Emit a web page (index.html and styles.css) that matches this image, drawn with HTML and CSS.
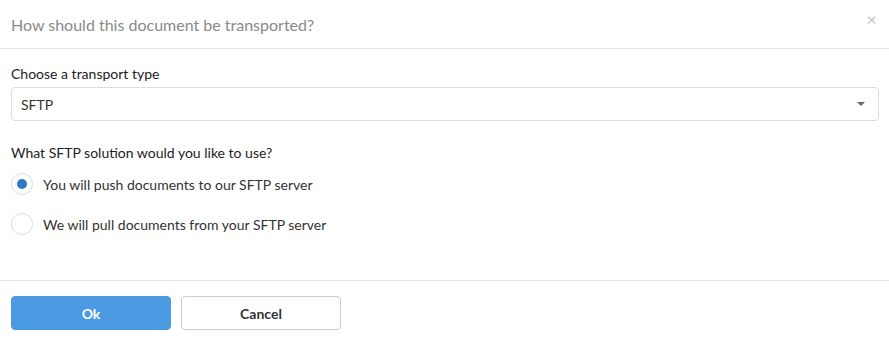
FILE: index.html
```html
<!DOCTYPE html>
<html>
<head>
    <title>Transport</title>
    <link rel="stylesheet" href="styles.css">
</head>
<body>
    <div class="modal">
        <div class="modal-header">
            <h2>How should this document be transported?</h2>
            <span class="close">&times;</span>
        </div>
        <div class="modal-body">
            <label class="field-label">Choose a transport type</label>
            <div class="select">
                <span>SFTP</span>
                <span class="caret"></span>
            </div>
            <div class="field-label question">What SFTP solution would you like to use?</div>
            <div class="radio-row">
                <span class="radio checked"></span>
                <span>You will push documents to our SFTP server</span>
            </div>
            <div class="radio-row">
                <span class="radio"></span>
                <span>We will pull documents from your SFTP server</span>
            </div>
        </div>
        <div class="modal-footer">
            <button class="btn btn-primary">Ok</button>
            <button class="btn btn-default">Cancel</button>
        </div>
    </div>
</body>
</html>
```

FILE: styles.css
```css
body {
    margin: 0;
    background: #fff;
    font-family: "Lato", "Liberation Sans", sans-serif;
    color: #333;
}
.modal {
    width: 889px;
    height: 341px;
}
.modal-header {
    height: 48px;
    padding: 0 11px;
    display: flex;
    align-items: center;
    justify-content: space-between;
    border-bottom: 1px solid #e5e5e5;
}
.modal-header h2 {
    margin: 0;
    font-size: 16px;
    font-weight: normal;
    color: #8a8a8a;
}
.close {
    color: #c4c4c4;
    font-size: 18px;
    margin-right: 1px;
    position: relative;
    top: -5px;
}
.modal-body {
    padding: 16px 10px 0 11px;
    height: 232px;
    box-sizing: border-box;
    border-bottom: 1px solid #e5e5e5;
}
.field-label {
    display: block;
    font-size: 14px;
    color: #222;
    height: 22px;
}
.select {
    height: 34px;
    box-sizing: border-box;
    border: 1px solid #ddd;
    border-radius: 4px;
    display: flex;
    align-items: center;
    justify-content: space-between;
    padding: 0 13px 0 9px;
    font-size: 14px;
    color: #333;
}
.caret {
    width: 0;
    height: 0;
    border-left: 4px solid transparent;
    border-right: 4px solid transparent;
    border-top: 4px solid #666;
}
.question {
    margin-top: 23px;
    height: 20px;
}
.radio-row {
    display: flex;
    align-items: center;
    gap: 10px;
    height: 40px;
    font-size: 14px;
    color: #333;
}
.radio {
    width: 22px;
    height: 22px;
    box-sizing: border-box;
    border: 1px solid #ddd;
    border-radius: 50%;
    display: flex;
    align-items: center;
    justify-content: center;
}
.radio.checked::after {
    content: "";
    width: 10px;
    height: 10px;
    border-radius: 50%;
    background: #2f78c4;
}
.modal-footer {
    padding: 15px 11px;
    display: flex;
    gap: 10px;
}
.btn {
    width: 160px;
    height: 34px;
    border-radius: 4px;
    font-family: inherit;
    font-size: 14px;
    font-weight: bold;
    cursor: pointer;
}
.btn-primary {
    background: #4c9ae2;
    border: 1px solid #4c9ae2;
    color: #fff;
}
.btn-default {
    background: #fff;
    border: 1px solid #ccc;
    color: #333;
}
```
